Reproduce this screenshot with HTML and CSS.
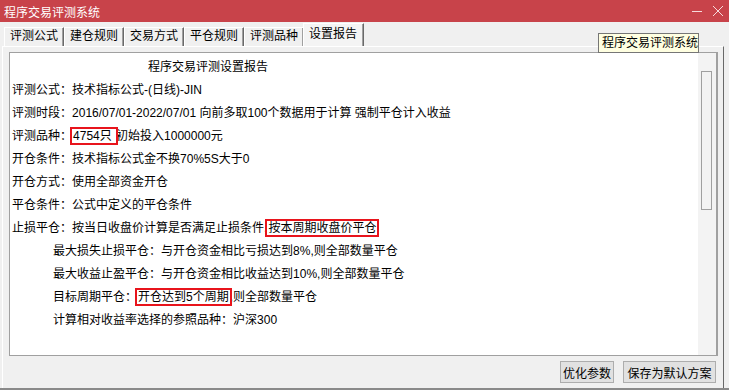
FILE: index.html
```html
<!DOCTYPE html>
<html lang="zh-CN">
<head>
    <meta charset="UTF-8">
    <title>程序交易评测系统</title>
    <link rel="stylesheet" href="styles.css">
</head>
<body>
    <div class="window">
        <div class="titlebar">
            <div class="title-text">程序交易评测系统</div>
            <div class="title-buttons">
                <svg width="12" height="12" viewBox="0 0 12 12" class="btn-min">
                    <path d="M1 6.5h10" stroke="#f6dadb" stroke-width="1"/>
                </svg>
                <svg width="12" height="12" viewBox="0 0 12 12" class="btn-close">
                    <path d="M1 1l10 10M11 1L1 11" stroke="#f6dadb" stroke-width="1"/>
                </svg>
            </div>
        </div>

        <div class="tabs">
            <div class="tab">评测公式</div>
            <div class="tab">建仓规则</div>
            <div class="tab">交易方式</div>
            <div class="tab">平仓规则</div>
            <div class="tab">评测品种</div>
            <div class="tab active">设置报告</div>
        </div>

        <div class="tab-page">
            <div class="report">
                <div class="report-text">
                    <div class="report-title">程序交易评测设置报告</div>
                    <div class="line">评测公式<span class="colon">：</span>技术指标公式-(日线)-JIN</div>
                    <div class="line">评测时段<span class="colon">：</span>2016/07/01-2022/07/01 向前多取100个数据用于计算 强制平仓计入收益</div>
                    <div class="line">评测品种<span class="colon">：</span><span class="mark">4754只 </span>初始投入1000000元</div>
                    <div class="line">开仓条件<span class="colon">：</span>技术指标公式金不换70%5S大于0</div>
                    <div class="line">开仓方式<span class="colon">：</span>使用全部资金开仓</div>
                    <div class="line">平仓条件<span class="colon">：</span>公式中定义的平仓条件</div>
                    <div class="line">止损平仓<span class="colon">：</span>按当日收盘价计算是否满足止损条件,<span class="mark">按本周期收盘价平仓</span></div>
                    <div class="line indent">最大损失止损平仓<span class="colon">：</span>与开仓资金相比亏损达到8%,则全部数量平仓</div>
                    <div class="line indent">最大收益止盈平仓<span class="colon">：</span>与开仓资金相比收益达到10%,则全部数量平仓</div>
                    <div class="line indent">目标周期平仓<span class="colon">：</span><span class="mark">开仓达到5个周期</span>,则全部数量平仓</div>
                    <div class="line indent">计算相对收益率选择的参照品种<span class="colon">：</span>沪深300</div>
                </div>
                <div class="scrollbar">
                    <div class="thumb"></div>
                </div>
            </div>

            <div class="actions">
                <button class="btn btn-opt">优化参数</button>
                <button class="btn btn-save">保存为默认方案</button>
            </div>
        </div>

        <div class="tooltip">程序交易评测系统</div>
    </div>
</body>
</html>
```

FILE: styles.css
```css
:root {
    --title-red: #c8434a;
    --face: #f0f0f0;
    --border-gray: #a0a0a0;
    --border-dark: #696969;
    --mark-red: #e8141c;
}

* {
    margin: 0;
    padding: 0;
    box-sizing: border-box;
}

body {
    width: 729px;
    height: 390px;
    overflow: hidden;
    background: var(--face);
    font-family: "Liberation Sans", "Noto Sans CJK SC", sans-serif;
    font-size: 12px;
    color: #000;
}

.window {
    position: relative;
    width: 729px;
    height: 390px;
    border-bottom: 2px solid #8a8a8a;
}

.titlebar {
    height: 22px;
    background: var(--title-red);
    color: #fff;
    display: flex;
    align-items: center;
    justify-content: space-between;
    padding-left: 4px;
    padding-right: 5px;
    font-size: 12px;
}

.title-buttons {
    display: flex;
    gap: 9px;
    align-items: center;
}

.btn-min,
.btn-close {
    display: block;
}

.tabs {
    display: flex;
    align-items: flex-end;
    height: 24px;
    padding-left: 4px;
}

.tab {
    width: 60px;
    height: 19px;
    line-height: 17px;
    padding-left: 5px;
    border-left: 1px solid #fff;
    border-top: 1px solid #fff;
    border-right: 1px solid var(--border-dark);
    box-shadow: inset -1px 0 0 var(--border-gray);
}

.tab.active {
    width: 61px;
    height: 23px;
    line-height: 20px;
    margin-left: -1px;
    background: #f4f4f4;
}

.tab-page {
    height: 342px;
    margin-left: 2px;
    width: 722px;
    border-left: 1px solid #fff;
    border-top: 1px solid #fff;
    border-right: 1px solid var(--border-dark);
    padding: 5px 0 0 6px;
}

.report {
    display: flex;
    width: 709px;
    height: 304px;
    background: #fff;
    border: 1px solid var(--border-gray);
}

.report-text {
    flex: 1;
    padding: 3px 0 0 2px;
    line-height: 23px;
    white-space: nowrap;
}

.report-title {
    padding-left: 136px;
}

.indent {
    padding-left: 41px;
}

/* full-width colon sits centred in its cell */
.colon {
    font-family: "Noto Sans CJK JP", sans-serif;
    line-height: 0;
}

.mark {
    outline: 2px solid var(--mark-red);
    outline-offset: 0px;
    padding: 0 1px;
}

.scrollbar {
    width: 19px;
    background: #f3f3f3;
    border-right: 1px solid var(--border-gray);
    padding: 18px 0 0 3px;
}

.thumb {
    width: 11px;
    height: 139px;
    border: 1px solid var(--border-gray);
    background: #f3f3f3;
}

.actions {
    display: flex;
    justify-content: flex-end;
    gap: 9px;
    padding: 5px 7px 0 0;
}

.btn {
    height: 22px;
    padding: 0;
    background: #e1e1e1;
    border: 1px solid #adadad;
    font-family: inherit;
    font-size: 12px;
    color: #000;
}

.btn-opt {
    width: 54px;
}

.btn-save {
    width: 93px;
}

.tooltip {
    position: absolute;
    left: 598px;
    top: 33px;
    width: 101px;
    height: 20px;
    line-height: 18px;
    padding-left: 3px;
    background: #ffffe1;
    border: 1px solid #767676;
    font-size: 12px;
}
```
